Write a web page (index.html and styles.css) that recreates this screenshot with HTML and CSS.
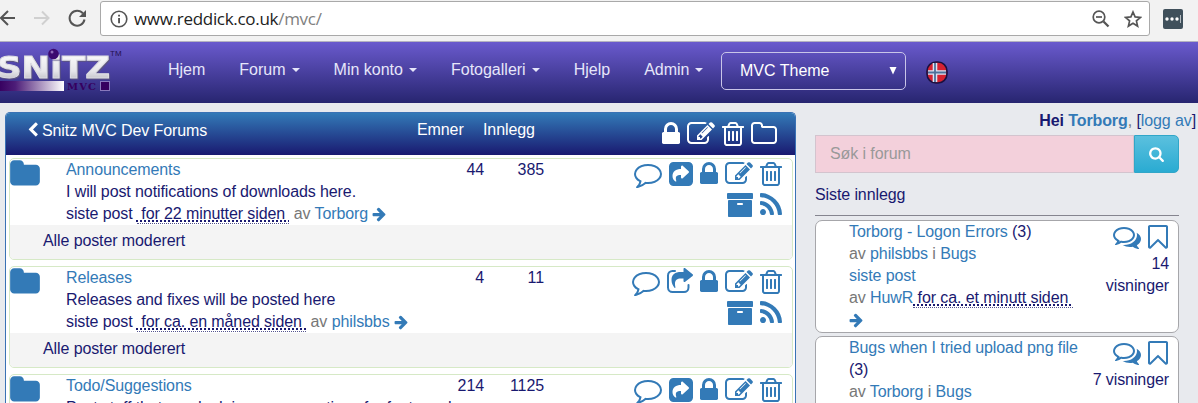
FILE: index.html
```html
<!DOCTYPE html>
<html lang="no">
<head>
<meta charset="utf-8">
<title>Snitz MVC Dev Forums</title>
<link rel="stylesheet" href="styles.css">
</head>
<body>
<svg class="defs" width="0" height="0" aria-hidden="true">
  <symbol id="folder" viewBox="64 0 1664 1792"><path d="M1728 608v704q0 92-66 158t-158 66h-1216q-92 0-158-66t-66-158v-960q0-92 66-158t158-66h320q92 0 158 66t66 158v32h672q92 0 158 66t66 158z"/></symbol>
  <symbol id="folder-o" viewBox="64 0 1664 1792"><path d="M1600 1312v-704q0-40-28-68t-68-28h-704q-40 0-68-28t-28-68v-64q0-40-28-68t-68-28h-320q-40 0-68 28t-28 68v960q0 40 28 68t68 28h1216q40 0 68-28t28-68zm128-704v704q0 92-66 158t-158 66h-1216q-92 0-158-66t-66-158v-960q0-92 66-158t158-66h320q92 0 158 66t66 158v32h672q92 0 158 66t66 158z"/></symbol>
  <symbol id="lock" viewBox="320 0 1152 1792"><path d="M640 768h512v-192q0-106-75-181t-181-75-181 75-75 181v192zm832 96v576q0 40-28 68t-68 28h-960q-40 0-68-28t-28-68v-576q0-40 28-68t68-28h32v-192q0-184 132-316t316-132 316 132 132 316v192h32q40 0 68 28t28 68z"/></symbol>
  <symbol id="edit" viewBox="0 0 1792 1792"><path d="M888 1184l116-116-152-152-116 116v56h96v96h56zm440-720q-16-16-33 1l-350 350q-17 17-1 33t33-1l350-350q17-17 1-33zm80 594v190q0 119-84.5 203.5t-203.5 84.5h-832q-119 0-203.5-84.5t-84.5-203.5v-832q0-119 84.5-203.5t203.5-84.5h832q63 0 117 25 15 7 18 23 3 17-9 29l-49 49q-14 14-32 8-23-6-45-6h-832q-66 0-113 47t-47 113v832q0 66 47 113t113 47h832q66 0 113-47t47-113v-126q0-13 9-22l64-64q15-15 35-7t20 29zm-96-738l288 288-672 672h-288v-288zm444 132l-92 92-288-288 92-92q28-28 68-28t68 28l152 152q28 28 28 68t-28 68z"/></symbol>
  <symbol id="trash" viewBox="192 0 1408 1792"><path d="M704 736v576q0 14-9 23t-23 9h-64q-14 0-23-9t-9-23v-576q0-14 9-23t23-9h64q14 0 23 9t9 23zm256 0v576q0 14-9 23t-23 9h-64q-14 0-23-9t-9-23v-576q0-14 9-23t23-9h64q14 0 23 9t9 23zm256 0v576q0 14-9 23t-23 9h-64q-14 0-23-9t-9-23v-576q0-14 9-23t23-9h64q14 0 23 9t9 23zm128 724v-948h-896v948q0 22 7 40.5t14.5 27 10.5 8.500h832q3 0 10.500-8.500t14.500-27 7-40.500zm-672-1076h448l-48-117q-7-9-17-11h-317q-10 2-17 11zm928 32v64q0 14-9 23t-23 9h-96v948q0 83-47 143.500t-113 60.500h-832q-66 0-113-58.500t-47-141.500v-952h-96q-14 0-23-9t-9-23v-64q0-14 9-23t23-9h309l70-167q15-37 54-63t79-26h320q40 0 79 26t54 63l70 167h309q14 0 23 9t9 23z"/></symbol>
  <symbol id="chevron" viewBox="320 0 1152 1792"><path d="M1427 301l-531 531 531 531q19 19 19 45t-19 45l-166 166q-19 19-45 19t-45-19l-742-742q-19-19-19-45t19-45l742-742q19-19 45-19t45 19l166 166q19 19 19 45t-19 45z"/></symbol>
  <symbol id="arrow" viewBox="64 0 1600 1792"><path d="M1600 960q0 54-37 91l-651 651q-39 37-91 37-51 0-90-37l-75-75q-38-38-38-91t38-91l293-293h-704q-52 0-84.500-37.500t-32.500-90.500v-128q0-53 32.500-90.500t84.500-37.500h704l-293-294q-38-36-38-90t38-90l75-75q38-38 90-38 53 0 91 38l651 651q37 35 37 90z"/></symbol>
  <symbol id="comment" viewBox="0 0 1792 1792"><path d="M896 384q-204 0-381.500 69.500t-282 187.500-104.500 255q0 112 71.500 213.500t201.500 175.500l87 50-27 96q-24 91-70 172 152-63 275-171l43-38 57 6q69 8 130 8 204 0 381.500-69.500t282-187.500 104.500-255-104.500-255-282-187.500-381.500-69.500zm896 512q0 174-120 321.500t-326 233-450 85.500q-70 0-145-8-198 175-460 242-49 14-114 22h-5q-15 0-27-10.500t-16-27.500v-1q-3-4-.5-12t2-10 4.500-9.500l6-9 7-8.500 8-9q7-8 31-34.500t34.500-38 31-39.500 32.500-51 27-59 26-76q-157-89-247.500-220t-90.500-281q0-174 120-321.500t326-233 450-85.500 450 85.500 326 233 120 321.500z"/></symbol>
  <symbol id="comments" viewBox="0 0 1792 1792"><path d="M704 384q-153 0-286 52t-211.500 141-78.500 191q0 82 53 158t149 132l97 56-35 84q34-20 62-39l44-31 53 10q78 14 153 14 153 0 286-52t211.500-141 78.500-191-78.500-191-211.500-141-286-52zm0-128q191 0 353.500 68.500t256.500 186.500 94 257-94 257-256.500 186.500-353.500 68.500q-86 0-176-16-124 88-278 128-36 9-86 16h-3q-11 0-20.500-8t-11.500-21q-1-3-1-6.500t.5-6.500 2-6l2.500-5 3.500-5.500 4-5 4.500-5 4-4.500q5-6 23-25t26-29.500 22.500-29 25-38.500 20.500-44q-124-72-195-177t-71-224q0-139 94-257t256.500-186.500 353.500-68.500zm822 1169q10 24 20.500 44t25 38.500 22.500 29 26 29.500 23 25q1 1 4 4.500t4.500 5 4 5 3.500 5.500l2.500 5 2 6 .5 6.500-1 6.500q-3 14-13 22t-22 7q-50-7-86-16-154-40-278-128-90 16-176 16-271 0-472-132 58 4 88 4 161 0 309-45t264-129q125-92 192-212t67-254q0-77-23-152 129 71 204 178t75 230q0 120-71 224.500t-195 176.500z"/></symbol>
  <symbol id="bookmark" viewBox="256 0 1280 1792"><path d="M1408 256h-1024v1242l423-406 89-85 89 85 423 406v-1242zm12-128q23 0 44 9 33 13 52.500 41t19.500 62v1289q0 34-19.500 62t-52.500 41q-19 8-44 8-48 0-83-32l-441-424-441 424q-36 33-83 33-23 0-44-9-33-13-52.500-41t-19.500-62v-1289q0-34 19.500-62t52.500-41q21-9 44-9h1048z"/></symbol>
  <symbol id="search" viewBox="64 0 1664 1792"><path d="M1216 832q0-185-131.500-316.500t-316.500-131.500-316.500 131.500-131.500 316.500 131.500 316.500 316.500 131.500 316.500-131.500 131.500-316.500zm512 832q0 52-38 90t-90 38q-54 0-90-38l-343-342q-179 124-399 124-143 0-273.500-55.500t-225-150-150-225-55.500-273.500 55.500-273.500 150-225 225-150 273.500-55.500 273.500 55.500 225 150 150 225 55.500 273.500q0 220-124 399l343 343q37 37 37 90z"/></symbol>
  <symbol id="archive" viewBox="64 0 1664 1792"><path d="M1088 832q0-26-19-45t-45-19h-256q-26 0-45 19t-19 45 19 45 45 19h256q26 0 45-19t19-45zm576-192v960q0 26-19 45t-45 19h-1408q-26 0-45-19t-19-45v-960q0-26 19-45t45-19h1408q26 0 45 19t19 45zm64-448v256q0 26-19 45t-45 19h-1536q-26 0-45-19t-19-45v-256q0-26 19-45t45-19h1536q26 0 45 19t19 45z"/></symbol>
  <symbol id="rss" viewBox="192 0 1408 1792"><path d="M576 1344q0 80-56 136t-136 56-136-56-56-136 56-136 136-56 136 56 56 136zm512 123q2 28-17 48-18 21-47 21h-135q-25 0-43-16.500t-20-41.500q-22-229-184.500-391.500t-391.500-184.500q-25-2-41.500-20t-16.500-43v-135q0-29 21-47 17-17 43-17h5q160 13 306 80.500t259 181.500q114 113 181.500 259t80.500 306zm512 2q2 27-18 47-18 20-46 20h-143q-26 0-44.500-17.500t-19.500-42.500q-12-215-101-408.500t-231.500-336-336-231.500-408.500-102q-25-1-42.500-19.500t-17.500-43.500v-143q0-28 20-46 18-18 44-18h3q262 13 501.500 120t425.500 294q187 186 294 425.500t120 501.500z"/></symbol>
  <symbol id="share" viewBox="0 0 24 28"><path fill-rule="evenodd" d="M4.500 2h15A4.500 4.500 0 0 1 24 6.500v15a4.500 4.500 0 0 1-4.500 4.500h-15A4.500 4.500 0 0 1 0 21.500v-15A4.500 4.500 0 0 1 4.500 2zM13 5.400c-.6.200-1 .5-1 1.100V9C7 9 3.500 11.500 3.500 16c0 2.300 1.200 4.300 3 5.500.5.300 1-.1.800-.6C6 16.500 7.500 15 12 15v2.500c0 1 1 1.300 1.700.7l6-5.500c.4-.4.4-1 0-1.400l-6-5.600c-.2-.2-.4-.3-.7-.3z"/></symbol>
  <symbol id="share-o" viewBox="0 0 26 28"><path d="M8 3H5.500A4.500 4.500 0 0 0 1 7.500v12A4.500 4.500 0 0 0 5.500 24h11.500a4.500 4.500 0 0 0 4.500-4.500V17" fill="none" stroke="currentColor" stroke-width="2" stroke-linecap="round"/><path d="M17.500 0c-.6 0-1 .4-1 1v3h-2.500C8 4 4.500 6.500 4.500 12c0 3 1.300 5.800 3 7.700.5.500 1.100.2.900-.5C7 13 9 10.500 14 10.500h2.500V13c0 .9 1 1.300 1.700.7l7.400-5.800c.6-.5.600-1.200 0-1.700L18.200.3c-.2-.2-.4-.3-.7-.3z"/></symbol>
</svg>

<div class="toolbar">
  <svg class="line tb-nav" width="88" height="20" viewBox="0 0 88 20" stroke-width="2"><path d="M15 10H1M8 3l-7 7 7 7" stroke="#555"/><path d="M34 10h14M42 3.500l6.500 6.500-6.500 6.500" stroke="#d0d0d0"/><path d="M83 5.500a7.500 7.500 0 1 0 1.500 6" stroke="#555"/><path d="M86 2v7h-7z" fill="#555"/></svg>
  <div class="address">
    <svg width="18" height="18" viewBox="0 0 18 18"><circle cx="9" cy="9" r="7.800" fill="none" stroke="#555" stroke-width="1.600"/><path d="M8.100 4.700h1.900v1.900H8.100zM8.100 8h1.900v5.300H8.100z" fill="#555"/></svg>
    <span class="url">www.reddick.co.uk<span>/mvc/</span></span>
    <svg class="line" width="18" height="18" viewBox="0 0 18 18" stroke="#555" stroke-width="1.700"><circle cx="7" cy="7" r="5.800"/><path d="M4 7h6"/><path d="M11.500 11.500l5 5" stroke-width="2.300"/></svg>
    <svg class="line star" width="18" height="18" viewBox="0 0 18 18" stroke="#555" stroke-width="1.700"><path d="M9 2l2.100 4.900 5.300.5-4 3.500 1.200 5.200L9 13.300l-4.600 2.800 1.200-5.200-4-3.500 5.300-.5z"/></svg>
  </div>
  <svg class="ext" width="20" height="20" viewBox="0 0 20 20"><rect width="20" height="20" rx="2" fill="#40505b"/><g fill="#fff"><circle cx="4" cy="10" r="1.700"/><circle cx="9" cy="10" r="1.700"/><circle cx="14" cy="10" r="1.700"/></g><path d="M17.500 6v8" stroke="#b5bdc2"/></svg>
</div>

<nav class="navbar">
  <svg class="logo" width="124" height="50" viewBox="0 0 124 50">
    <defs>
      <linearGradient id="silver" x1="0" y1="0" x2="0" y2="1"><stop offset="0" stop-color="#fff"/><stop offset=".6" stop-color="#e6e6ea"/><stop offset="1" stop-color="#aaaab2"/></linearGradient>
      <linearGradient id="bar"><stop offset="0" stop-color="#36005f"/><stop offset=".25" stop-color="#4d1d78"/><stop offset="1" stop-color="#fff"/></linearGradient>
    </defs>
    <text class="logo-word" x="-3" y="33" textLength="113" lengthAdjust="spacingAndGlyphs" fill="url(#silver)" stroke="#dcdce2">SNiTZ</text>
    <circle cx="53.500" cy="9" r="5.300" fill="#3c0a70"/><circle cx="52" cy="7" r="1.500" fill="#8e6ab8"/>
    <rect x="-1" y="36" width="65" height="10" fill="url(#bar)"/>
    <text class="logo-mvc" x="67" y="45" textLength="29">MVC</text>
    <rect x="100.500" y="36.500" width="9" height="9" fill="#36005f" stroke="#8878bc"/>
    <text class="logo-tm" x="110" y="11">TM</text>
  </svg>
  <div class="menu"><span>Hjem</span><span class="drop">Forum</span><span class="drop">Min konto</span><span class="drop">Fotogalleri</span><span>Hjelp</span><span class="drop">Admin</span></div>
  <div class="theme"><span>MVC Theme</span><svg width="8" height="8" viewBox="0 0 8 8"><path d="M.5 0h7L4 7.500z" fill="#fff"/></svg></div>
  <svg class="flag" width="22" height="24" viewBox="0 0 22 24"><rect x="1" y="1" width="20" height="21" rx="9" fill="#d62231" stroke="#1a1040" stroke-width="1.600"/><path d="M9 2v19M2 11.500h18" stroke="#dbe4f4" stroke-width="4.600"/><path d="M9 2v19M2 11.500h18" stroke="#4f7099" stroke-width="1.800"/></svg>
</nav>

<div class="content">
  <main class="panel">
    <header class="panel-head">
      <span class="title"><svg class="chev"><use href="#chevron"/></svg>Snitz MVC Dev Forums</span>
      <span class="col-a">Emner</span><span class="col-b">Innlegg</span>
      <span class="icons"><svg class="i18"><use href="#lock"/></svg><svg class="i28"><use href="#edit"/></svg><svg class="i22"><use href="#trash"/></svg><svg class="i26"><use href="#folder-o"/></svg></span>
    </header>

    <section class="forum">
      <div class="row">
        <svg class="big"><use href="#folder"/></svg>
        <div class="info"><a>Announcements</a><p>I will post notifications of downloads here.</p><p>siste post <abbr>&nbsp;for 22 minutter siden&nbsp;</abbr> <i>av</i> <a>Torborg</a> <svg class="go"><use href="#arrow"/></svg></p></div>
        <span class="topics">44</span><span class="posts">385</span>
        <div class="tools"><svg class="i28"><use href="#comment"/></svg><svg class="i24"><use href="#share"/></svg><svg class="i18"><use href="#lock"/></svg><svg class="i28"><use href="#edit"/></svg><svg class="i22"><use href="#trash"/></svg><svg class="i26"><use href="#archive"/></svg><svg class="i22"><use href="#rss"/></svg></div>
      </div>
      <footer>Alle poster moderert</footer>
    </section>

    <section class="forum">
      <div class="row">
        <svg class="big"><use href="#folder"/></svg>
        <div class="info"><a>Releases</a><p>Releases and fixes will be posted here</p><p>siste post <abbr>&nbsp;for ca. en måned siden&nbsp;</abbr> <i>av</i> <a>philsbbs</a> <svg class="go"><use href="#arrow"/></svg></p></div>
        <span class="topics">4</span><span class="posts">11</span>
        <div class="tools"><svg class="i28"><use href="#comment"/></svg><svg class="i26"><use href="#share-o"/></svg><svg class="i18"><use href="#lock"/></svg><svg class="i28"><use href="#edit"/></svg><svg class="i22"><use href="#trash"/></svg><svg class="i26"><use href="#archive"/></svg><svg class="i22"><use href="#rss"/></svg></div>
      </div>
      <footer>Alle poster moderert</footer>
    </section>

    <section class="forum">
      <div class="row">
        <svg class="big"><use href="#folder"/></svg>
        <div class="info"><a>Todo/Suggestions</a><p>Post stuff that needs doing or suggestions for features here</p></div>
        <span class="topics">214</span><span class="posts">1125</span>
        <div class="tools"><svg class="i28"><use href="#comment"/></svg><svg class="i24"><use href="#share"/></svg><svg class="i18"><use href="#lock"/></svg><svg class="i28"><use href="#edit"/></svg><svg class="i22"><use href="#trash"/></svg></div>
      </div>
    </section>
  </main>

  <aside class="side">
    <div class="hello"><b>Hei <a>Torborg</a></b><i>,</i> [<a>logg av</a>]</div>
    <div class="search"><span>Søk i forum</span><button><svg><use href="#search"/></svg></button></div>
    <h2>Siste innlegg</h2>
    <article class="post">
      <div class="post-text"><a>Torborg - Logon Errors</a> (3)<br><i>av</i> <a>philsbbs</a> <i>i</i> <a>Bugs</a><br><a>siste post</a><br><i>av</i> <a>HuwR</a><abbr>&nbsp;for ca. et minutt siden&nbsp;</abbr><br><svg class="go"><use href="#arrow"/></svg></div>
      <div class="post-meta"><span class="post-icons"><svg class="i28"><use href="#comments"/></svg><svg class="i20"><use href="#bookmark"/></svg></span>14<br>visninger</div>
    </article>
    <article class="post">
      <div class="post-text"><a>Bugs when I tried upload png file</a><br>(3)<br><i>av</i> <a>Torborg</a> <i>i</i> <a>Bugs</a></div>
      <div class="post-meta"><span class="post-icons"><svg class="i28"><use href="#comments"/></svg><svg class="i20"><use href="#bookmark"/></svg></span>7 visninger</div>
    </article>
  </aside>
</div>
</body>
</html>
```

FILE: styles.css
```css
* { box-sizing: border-box; }
html { overflow: hidden; }
body {
  margin: 0;
  height: 403px;
  overflow: hidden;
  background: #e8eaee;
  color: #191970;
  font: 16px/22px "Liberation Sans", Arial, sans-serif;
  letter-spacing: -0.1px;
}
.defs { display: none; }
svg { fill: currentColor; flex: none; }
.line { fill: none; }
p, h2 { margin: 0; font-size: 16px; font-weight: normal; }
a { color: #337ab7; }
i { font-style: normal; color: #777; }
abbr {
  padding-bottom: 1px;
  text-decoration: underline dotted;
  text-underline-offset: 1px;
  text-decoration-thickness: 1.5px;
  border-bottom: 1px dotted #55558f;
}

.i18, .i20, .i22, .i24, .i26, .i28 { height: 28px; }
.i18 { width: 18px; }
.i20 { width: 20px; }
.i22 { width: 22px; }
.i24 { width: 24px; }
.i26 { width: 26px; }
.i28 { width: 28px; }
.go { width: 14px; height: 16px; color: #337ab7; vertical-align: -3px; }

.toolbar {
  display: flex;
  align-items: flex-start;
  height: 42px;
  background: #f2f2f2;
  border-bottom: 1px solid #b4b2c0;
}
.tb-nav { margin: 8px 12px 0 0; }
.address {
  display: flex;
  align-items: center;
  width: 1050px;
  height: 35px;
  margin-top: 1px;
  padding: 0 7px 0 9px;
  background: #fff;
  border: 1px solid #a9a9a9;
  border-radius: 3px;
}
.url {
  flex: 1;
  padding-left: 6px;
  color: #222;
  font: 17px/24px "Open Sans", "Noto Sans", sans-serif;
  letter-spacing: -0.3px;
}
.url span { color: #808080; }
.star { margin-left: 14px; }
.ext { margin: 9px 0 0 13px; }

.navbar {
  display: flex;
  align-items: flex-start;
  height: 61px;
  background: linear-gradient(#6a5acd, #272570);
  color: #e6e6fa;
  letter-spacing: 0;
}
.logo { margin-top: 3px; overflow: visible; }
.logo-word { font: bold 30px "DejaVu Sans", sans-serif; filter: drop-shadow(1px 1px 0 #5b5480); }
.logo-mvc { font: bold 10px "DejaVu Serif", serif; fill: #36005f; }
.logo-tm { font: 8px "Liberation Sans", sans-serif; fill: #24104f; }
.menu { display: flex; gap: 34px; width: 536px; margin: 17px 0 0 44px; white-space: nowrap; }
.drop::after {
  content: "";
  display: inline-block;
  margin-left: 6px;
  vertical-align: 3px;
  border: 4.5px solid transparent;
  border-top-color: currentColor;
  border-bottom: 0;
}
.theme {
  display: flex;
  align-items: center;
  justify-content: space-between;
  width: 185px;
  height: 38px;
  margin: 10px 0 0 17px;
  padding: 0 8px 0 18px;
  border: 1px solid #c9c5e8;
  border-radius: 5px;
  color: #fff;
}
.flag { margin: 19px 0 0 20px; }

.content { display: flex; align-items: flex-start; padding: 9px 0 0 5px; }
.panel {
  width: 791px;
  height: 291px;
  background: #fff;
  border: 1px solid #3a72b5;
  border-bottom: 0;
  border-radius: 5px 5px 0 0;
  overflow: hidden;
}
.panel-head {
  display: flex;
  align-items: flex-start;
  height: 42px;
  padding: 6px 18px 0 22px;
  background: linear-gradient(#337ab7, #191970);
  color: #fff;
}
.title { width: 389px; padding-top: 1px; }
.chev { width: 10px; height: 16px; margin-right: 4px; vertical-align: -2px; }
.col-a { width: 66px; }
.icons { display: flex; gap: 7px; margin: 1px 0 0 auto; }
.forum {
  height: 102px;
  margin: 3px 2px 6px 3px;
  border: 1px solid #d6e9c6;
  border-radius: 5px;
  overflow: hidden;
}
.forum + .forum { margin-top: 0; }
.row { display: flex; height: 66px; }
.big { width: 30px; height: 32px; margin-top: -1px; color: #337ab7; }
.info { width: 363px; margin-left: 26px; white-space: nowrap; }
.topics { width: 55px; text-align: right; }
.posts { width: 60px; text-align: right; }
.tools {
  display: flex;
  flex-wrap: wrap;
  justify-content: flex-end;
  align-content: flex-start;
  gap: 3px 7px;
  width: 170px;
  margin: 1px 0 0 auto;
  padding-right: 10px;
  color: #337ab7;
}
.forum footer { height: 34px; padding: 5px 33px; background: #f4f4f4; }

.side { width: 383px; margin-left: 19px; }
.hello { padding-right: 2px; margin-top: -2px; text-align: right; }
.search { display: flex; width: 364px; height: 38px; margin-top: 3px; }
.search span {
  flex: 1;
  padding: 7px 14px;
  background: #f3d0db;
  border: 1px solid #d3c4ce;
  color: #999;
}
.search button {
  width: 45px;
  padding: 0;
  border: 1px solid #31a6c8;
  border-radius: 0 5px 5px 0;
  background: linear-gradient(#5bc0de, #2aabd2);
  color: #fff;
}
.search button svg { width: 15px; height: 16px; vertical-align: -2px; }
.side h2 { width: 364px; height: 43px; padding-top: 11px; border-bottom: 1px solid #85858f; }
.post {
  display: flex;
  justify-content: space-between;
  width: 364px;
  height: 113px;
  margin-top: 4px;
  padding: 0 9px 0 33px;
  background: #fff;
  border: 1px solid #a6a6aa;
  border-radius: 7px;
}
.post + .post { margin-top: 3px; }
.post-text { white-space: nowrap; }
.post-meta { text-align: right; }
.post-icons { display: flex; justify-content: flex-end; gap: 7px; height: 32px; padding: 2px 1px 0 0; color: #337ab7; }
```
